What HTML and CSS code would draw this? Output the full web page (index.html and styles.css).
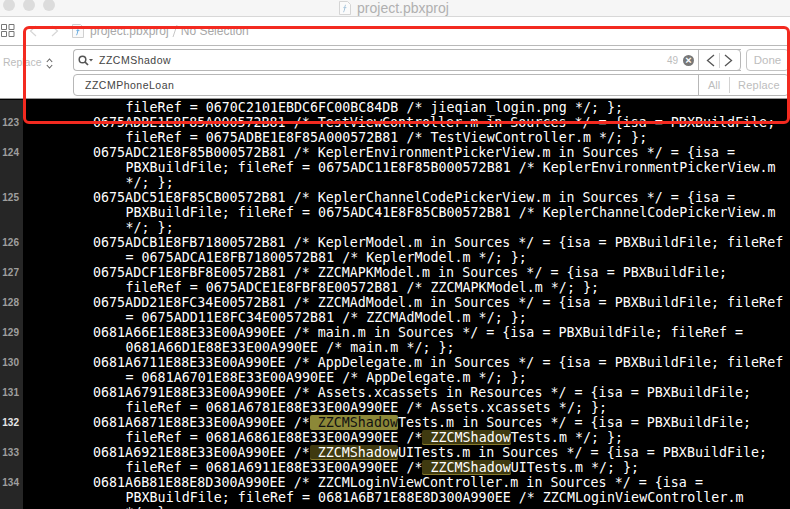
FILE: index.html
```html
<!DOCTYPE html>
<html lang="en">
<head>
<meta charset="utf-8">
<title>project.pbxproj</title>
<link rel="stylesheet" href="styles.css">
</head>
<body>
<div class="window">
  <header class="titlebar">
    <div class="lights"><i></i><i></i><i></i></div>
    <div class="title">
      <svg class="fileicon" width="12" height="14" viewBox="0 0 12 14"><path d="M.5.500h8l3 3v10H.5z" fill="#fbfbfb" stroke="#d5d5d5"/><path d="M7 4C5.600 4 6 6 5.600 8S5 11 4 11M4.400 6.600h3" fill="none" stroke="#a9c6dc"/></svg>
      <span>project.pbxproj</span>
    </div>
  </header>
  <nav class="jumpbar">
    <svg class="grid" width="14" height="13" viewBox="0 0 14 13"><path d="M.5.500h5v5h-5zM8 .500h5v5H8zM.5 7.500h5v5h-5zM8 7.500h5v5H8z" fill="none" stroke="#777"/></svg>
    <svg class="chev first" width="8" height="12" viewBox="0 0 8 12"><path d="M7 1 1.500 6 7 11" fill="none" stroke="#d6d6d6" stroke-width="1.200"/></svg>
    <svg class="chev" width="8" height="12" viewBox="0 0 8 12"><path d="M1 1l5.500 5L1 11" fill="none" stroke="#d6d6d6" stroke-width="1.200"/></svg>
    <svg class="docicon" width="12" height="14" viewBox="0 0 12 14"><path d="M.5.500h8l3 3v10H.5z" fill="#fafafa" stroke="#d0d0d0"/><path d="M7 4C5.600 4 6 6 5.600 8S5 11 4 11M4.400 6.600h3" fill="none" stroke="#6eaee0"/></svg>
    <span class="crumb">project.pbxproj</span>
    <svg class="sep" width="6" height="14" viewBox="0 0 6 14"><path d="M1 13 5 1" stroke="#c8c8c8" fill="none"/></svg>
    <span class="crumb">No Selection</span>
  </nav>
  <section class="findbar">
    <div class="mode"><span>Replace</span>
      <svg width="7" height="11" viewBox="0 0 7 11"><path d="M.8 4 3.500 1 6.200 4M.8 7l2.700 3 2.700-3" fill="none" stroke="#666" stroke-width="1.100"/></svg>
    </div>
    <div class="fields">
      <div class="row">
        <div class="field search">
          <svg class="glass" width="15" height="11" viewBox="0 0 15 11"><circle cx="4.500" cy="4.500" r="3.300" fill="none" stroke="#555" stroke-width="1.500"/><path d="M7 7l3 3" stroke="#555" stroke-width="1.700"/><path d="M11 4h4l-2 2.500z" fill="#555"/></svg>
          <span class="value">ZZCMShadow</span>
          <span class="count">49</span>
          <span class="clear">&#215;</span>
          <div class="stepper">
            <svg width="9" height="13" viewBox="0 0 9 13"><path d="M8 1 1.500 6.500 8 12" fill="none" stroke="#555" stroke-width="1.300"/></svg>
            <i></i>
            <svg width="9" height="13" viewBox="0 0 9 13"><path d="M1 1l6.500 5.500L1 12" fill="none" stroke="#555" stroke-width="1.300"/></svg>
          </div>
        </div>
        <button class="done">Done</button>
      </div>
      <div class="row">
        <div class="field replace">
          <span class="value">ZZCMPhoneLoan</span>
          <div class="actions"><span class="all">All</span><span class="rep">Replace</span></div>
        </div>
      </div>
    </div>
  </section>
  <main class="editor">
<div class="line"><span class="num"></span><code class="wrap">fileRef = 0670C2101EBDC6FC00BC84DB /* jieqian_login.png */; };</code></div>
<div class="line"><span class="num">123</span><code>0675ADBE1E8F85A000572B81 /* TestViewController.m in Sources */ = {isa = PBXBuildFile;</code></div>
<div class="line"><span class="num"></span><code class="wrap">fileRef = 0675ADBE1E8F85A000572B81 /* TestViewController.m */; };</code></div>
<div class="line"><span class="num">124</span><code>0675ADC21E8F85B000572B81 /* KeplerEnvironmentPickerView.m in Sources */ = {isa =</code></div>
<div class="line"><span class="num"></span><code class="wrap">PBXBuildFile; fileRef = 0675ADC11E8F85B000572B81 /* KeplerEnvironmentPickerView.m</code></div>
<div class="line"><span class="num"></span><code class="wrap">*/; };</code></div>
<div class="line"><span class="num">125</span><code>0675ADC51E8F85CB00572B81 /* KeplerChannelCodePickerView.m in Sources */ = {isa =</code></div>
<div class="line"><span class="num"></span><code class="wrap">PBXBuildFile; fileRef = 0675ADC41E8F85CB00572B81 /* KeplerChannelCodePickerView.m</code></div>
<div class="line"><span class="num"></span><code class="wrap">*/; };</code></div>
<div class="line"><span class="num">126</span><code>0675ADCB1E8FB71800572B81 /* KeplerModel.m in Sources */ = {isa = PBXBuildFile; fileRef</code></div>
<div class="line"><span class="num"></span><code class="wrap">= 0675ADCA1E8FB71800572B81 /* KeplerModel.m */; };</code></div>
<div class="line"><span class="num">127</span><code>0675ADCF1E8FBF8E00572B81 /* ZZCMAPKModel.m in Sources */ = {isa = PBXBuildFile;</code></div>
<div class="line"><span class="num"></span><code class="wrap">fileRef = 0675ADCE1E8FBF8E00572B81 /* ZZCMAPKModel.m */; };</code></div>
<div class="line"><span class="num">128</span><code>0675ADD21E8FC34E00572B81 /* ZZCMAdModel.m in Sources */ = {isa = PBXBuildFile; fileRef</code></div>
<div class="line"><span class="num"></span><code class="wrap">= 0675ADD11E8FC34E00572B81 /* ZZCMAdModel.m */; };</code></div>
<div class="line"><span class="num">129</span><code>0681A66E1E88E33E00A990EE /* main.m in Sources */ = {isa = PBXBuildFile; fileRef =</code></div>
<div class="line"><span class="num"></span><code class="wrap">0681A66D1E88E33E00A990EE /* main.m */; };</code></div>
<div class="line"><span class="num">130</span><code>0681A6711E88E33E00A990EE /* AppDelegate.m in Sources */ = {isa = PBXBuildFile; fileRef</code></div>
<div class="line"><span class="num"></span><code class="wrap">= 0681A6701E88E33E00A990EE /* AppDelegate.m */; };</code></div>
<div class="line"><span class="num">131</span><code>0681A6791E88E33E00A990EE /* Assets.xcassets in Resources */ = {isa = PBXBuildFile;</code></div>
<div class="line"><span class="num"></span><code class="wrap">fileRef = 0681A6781E88E33E00A990EE /* Assets.xcassets */; };</code></div>
<div class="line"><span class="num cur">132</span><code>0681A6871E88E33E00A990EE /*<mark class="hit active"> ZZCMShadow</mark>Tests.m in Sources */ = {isa = PBXBuildFile;</code></div>
<div class="line"><span class="num"></span><code class="wrap">fileRef = 0681A6861E88E33E00A990EE /*<mark class="hit"> ZZCMShadow</mark>Tests.m */; };</code></div>
<div class="line"><span class="num">133</span><code>0681A6921E88E33E00A990EE /*<mark class="hit"> ZZCMShadow</mark>UITests.m in Sources */ = {isa = PBXBuildFile;</code></div>
<div class="line"><span class="num"></span><code class="wrap">fileRef = 0681A6911E88E33E00A990EE /*<mark class="hit"> ZZCMShadow</mark>UITests.m */; };</code></div>
<div class="line"><span class="num">134</span><code>0681A6B81E88E8D300A990EE /* ZZCMLoginViewController.m in Sources */ = {isa =</code></div>
<div class="line"><span class="num"></span><code class="wrap">PBXBuildFile; fileRef = 0681A6B71E88E8D300A990EE /* ZZCMLoginViewController.m</code></div>
<div class="line"><span class="num"></span><code class="wrap">*/; };</code></div>
  </main>
  <div class="annotation"></div>
</div>
</body>
</html>
```
FILE: styles.css
```css
* { box-sizing: border-box; }
html, body { margin: 0; height: 100%; overflow: hidden; }
body { font-family: "Liberation Sans", sans-serif; background: #000; }
.window { position: relative; width: 790px; height: 509px; overflow: hidden; display: flex; flex-direction: column; }

.titlebar { height: 17px; flex: none; background: #f6f6f6; border-bottom: 1px solid #d8d8d8; position: relative; display: flex; justify-content: center; }
.lights { position: absolute; left: 3px; top: -1px; display: flex; gap: 8px; }
.lights i { width: 12px; height: 12px; border-radius: 50%; background: #dcdcdc; }
.title { display: flex; align-items: center; gap: 6px; height: 16px; color: #b0b0b0; margin-right: 2px; }
.title span { font-size: 14px; }

.jumpbar { height: 29px; flex: none; background: #fff; border-bottom: 1px solid #b9b9b9; display: flex; align-items: center; padding: 0 0 1px 1px; font-size: 12px; }
.grid { margin-right: 14px; }
.chev { margin-right: 14px; }
.docicon { margin-right: 6px; margin-left: -1px; }
.crumb { color: #a8a8a8; }
.sep { margin: 0 3px; }

.findbar { height: 52px; flex: none; background: #fff; display: flex; padding-top: 3px; }
.mode { width: 73px; flex: none; display: flex; align-items: flex-start; gap: 4px; padding: 7px 0 0 3px; font-size: 10.500px; color: #bcbcbc; }
.mode svg { margin-top: 2px; }
.fields { flex: 1; display: flex; flex-direction: column; gap: 3px; }
.row { display: flex; height: 22px; gap: 5px; }
.field { position: relative; flex: 1; display: flex; align-items: center; background: #fff; border: 1px solid #b7b7b7; border-radius: 4px 0 0 4px; font-size: 10.500px; color: #444; border-right: 0; }
.glass { margin-left: 4px; margin-right: 6px; }
.value { letter-spacing: .5px; }
.replace .value { margin-left: 11px; }
.count { margin-left: auto; color: #bdbdbd; font-size: 10px; margin-right: 5px; }
.clear { width: 11px; height: 11px; border-radius: 50%; background: #777; color: #fff; font-size: 11px; line-height: 11px; text-align: center; font-weight: 700; margin-right: 4px; }
.stepper { width: 43px; height: 22px; margin: -1px 0; border: 1px solid #b7b7b7; border-radius: 0 4px 4px 0; display: flex; align-items: center; justify-content: space-around; padding: 0 5px; }
.stepper i { width: 1px; height: 15px; background: #d2d2d2; }
.done { width: 43px; height: 22px; margin-right: 1px; padding: 0; background: #fff; border: 1px solid #c4c4c4; border-radius: 4px; font-family: "Liberation Sans", sans-serif; font-size: 11.500px; color: #bdbdbd; }
.replace { border-right: 1px solid #b7b7b7; border-radius: 4px; margin-right: 1px; }
.actions { margin-left: auto; height: 100%; border-left: 1px solid #b7b7b7; display: flex; align-items: center; color: #bdbdbd; width: 90px; font-size: 11px; }
.all { width: 31px; text-align: center; border-right: 1px solid #d2d2d2; line-height: 16px; }
.rep { flex: 1; text-align: center; letter-spacing: .2px; }

.editor { flex: 1; min-height: 0; background: #000; border-top: 1px solid #9a9a9a; overflow: hidden; padding-top: 1px; }
.line { display: flex; height: 15px; line-height: 15px; }
.num { width: 23px; flex: none; background: #262626; color: #9e9e9e; font-size: 10px; font-weight: 700; text-align: right; padding-right: 4px; }
.num.cur { color: #e6e6e6; }
code { padding-left: 70px; font-family: "DejaVu Sans Mono", "Liberation Mono", monospace; font-size: 13.300px; letter-spacing: .02px; color: #fff; white-space: pre; }
code.wrap { padding-left: 102.500px; }
.hit { background: #3f3a10; color: #fff; box-shadow: inset 0 -1px 0 #85782a; border-radius: 2px; }
.hit.active { background: #8c8838; color: #111; box-shadow: none; }

.annotation { position: absolute; left: 23px; top: 26px; width: 767px; height: 98px; border: 3px solid #f32a20; border-radius: 6px; pointer-events: none; }
```
